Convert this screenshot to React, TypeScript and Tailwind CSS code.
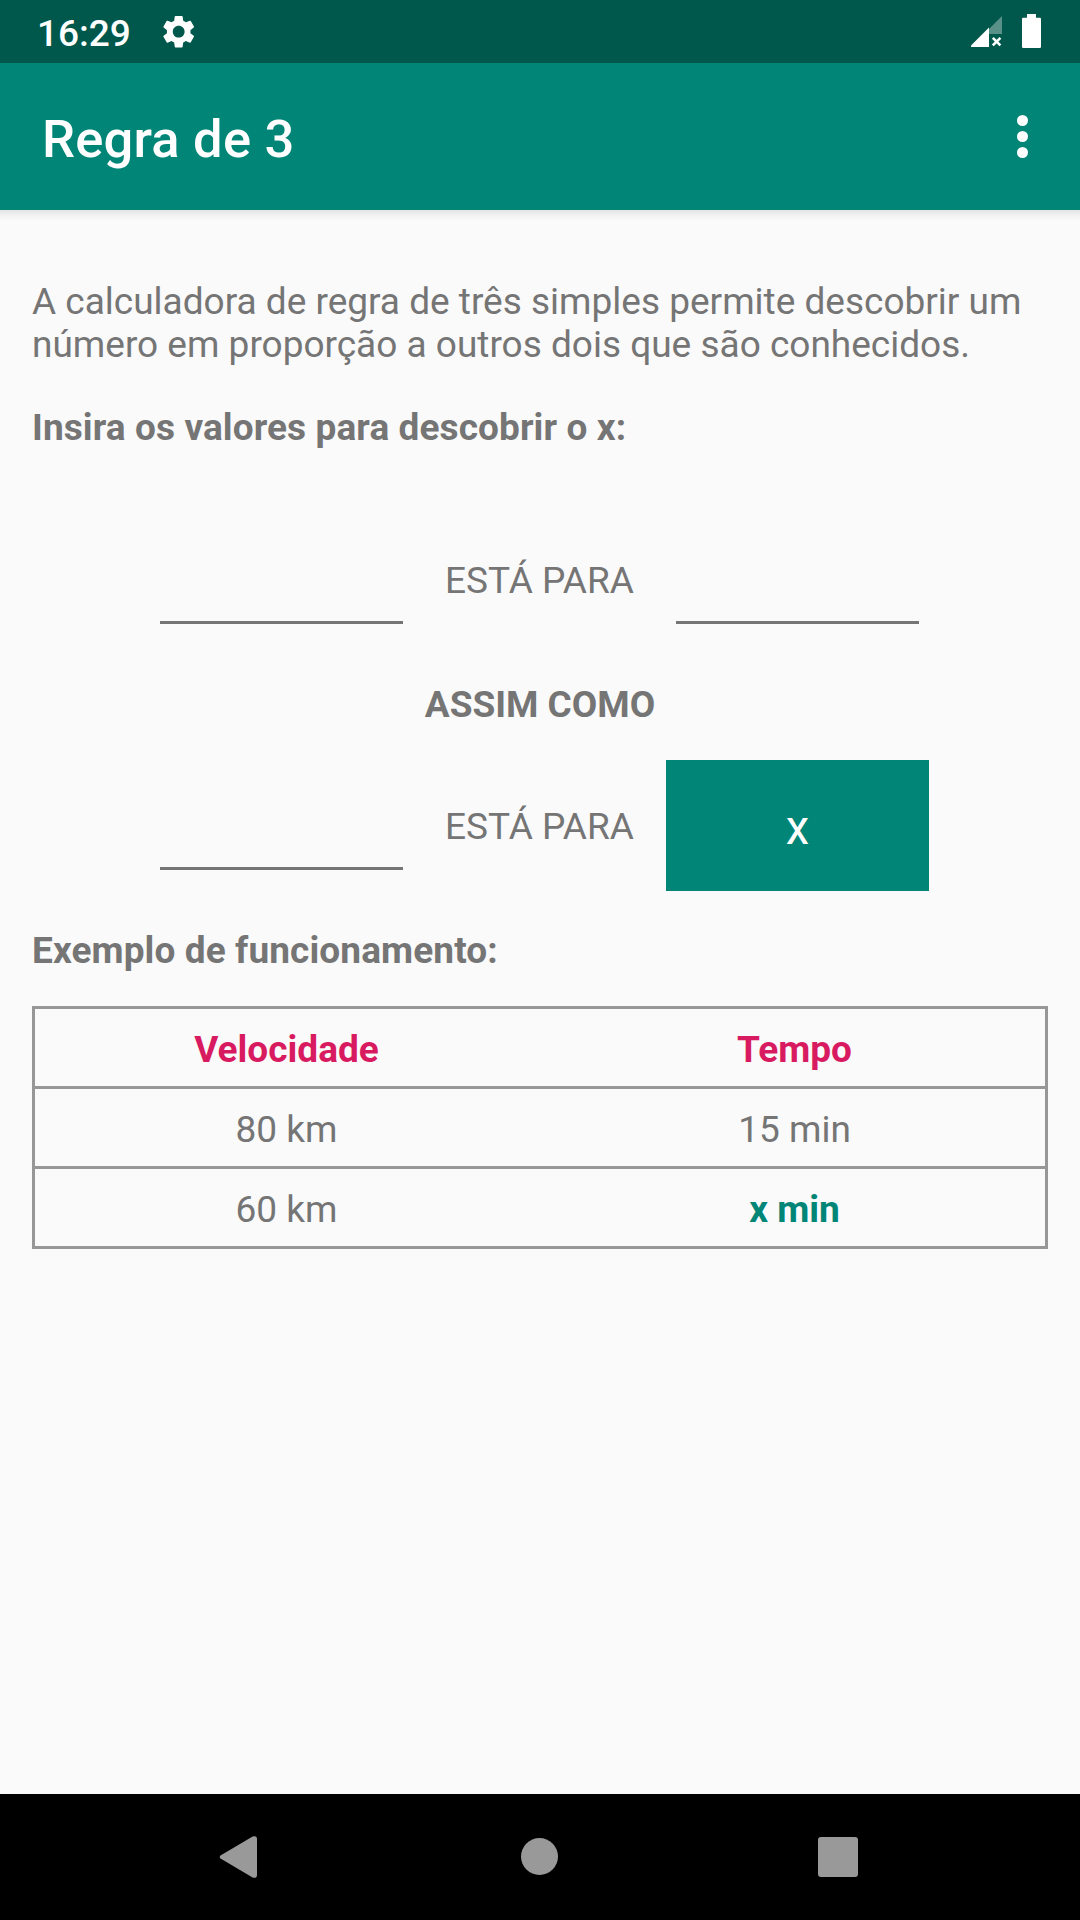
import { useState } from 'react';
import { MdSettings } from 'react-icons/md';

const rows = [
  { velocidade: '80 km', tempo: '15 min', unknown: false },
  { velocidade: '60 km', tempo: 'x min', unknown: true },
];

function StatusBar() {
  return (
    <div className="h-[63px] bg-[#00574b] flex items-start text-white">
      <span className="ml-[37px] mt-[12px] text-[37px] leading-[43px] font-medium">16:29</span>
      <MdSettings className="ml-[28px] mt-[11.5px] w-[39.4px] h-[39.4px]" />
      <svg className="ml-auto mt-[16px] w-[31px] h-[31px]" viewBox="0 0 31 31" fill="none">
        <path d="M18 13L31 0V18H18Z" fill="#fff" fillOpacity="0.35" />
        <path d="M0 31V29.5L18 11.5V31Z" fill="#fff" />
        <path d="M21.8 21.8L29.4 29.4M29.4 21.8L21.8 29.4" stroke="#fff" strokeWidth="2.6" />
      </svg>
      <svg className="ml-5 mr-[39px] mt-[14px] w-[19px] h-[34px]" viewBox="0 0 19 34" fill="#fff">
        <rect x="5" y="0" width="9" height="5" />
        <rect x="0" y="3.7" width="19" height="30.3" rx="1.3" />
      </svg>
    </div>
  );
}

function NavBar() {
  return (
    <div className="h-[126px] bg-black flex items-start text-[#999999]">
      <svg className="ml-[219px] mt-[42px] w-[38px] h-[42px]" viewBox="0 0 38 42" fill="currentColor">
        <path d="M1.5 19.4L33.6 0.5Q38 -0.8 38 3V39Q38 42.8 33.6 41.5L1.5 22.6Q0 21 1.5 19.4Z" />
      </svg>
      <div className="ml-[264px] mt-[44px] w-[37px] h-[37px] rounded-full bg-[#999999]" />
      <div className="ml-[260px] mt-[43px] w-[40px] h-[40px] rounded-[3px] bg-[#999999]" />
    </div>
  );
}

export default function App() {
  const [a, setA] = useState('');
  const [b, setB] = useState('');
  const [c, setC] = useState('');
  const [result, setResult] = useState('x');

  const handleCalculate = () => {
    const value = (Number(b) * Number(c)) / Number(a);
    if (a && b && c && Number.isFinite(value)) {
      setResult(String(value));
    }
  };

  return (
    <div className="w-[1080px] h-[1920px] flex flex-col bg-[#fafafa] text-[#757575] text-[37px] leading-[43px] font-[Roboto,sans-serif]">
      <StatusBar />
      <header className="h-[147px] bg-[#008577] flex items-start justify-between">
        <h1 className="ml-[42px] mt-[45px] text-[52.5px] leading-[62px] tracking-[0.2px] font-medium text-white">Regra de 3</h1>
        <button className="mt-[52px] mr-[52px] flex flex-col gap-[5px]" aria-label="Menu">
          <span className="w-[11px] h-[11px] rounded-full bg-white" />
          <span className="w-[11px] h-[11px] rounded-full bg-white" />
          <span className="w-[11px] h-[11px] rounded-full bg-white" />
        </button>
      </header>
      <div className="h-[11px] bg-gradient-to-b from-[#e4e4e4] via-[#f2f2f2] to-[#fafafa]" />

      <main className="flex-1 px-8 pt-[59px]">
        <p>A calculadora de regra de três simples permite descobrir um número em proporção a outros dois que são conhecidos.</p>
        <p className="mt-10 font-bold tracking-[0.1px]">Insira os valores para descobrir o x:</p>

        <div className="mt-[110px] ml-[128px] h-[65px] flex">
          <input value={a} onChange={(e) => setA(e.target.value)} className="w-[243px] border-b-[3px] border-[#757575] text-center outline-none" />
          <span className="w-[273px] text-center">ESTÁ PARA</span>
          <input value={b} onChange={(e) => setB(e.target.value)} className="w-[243px] border-b-[3px] border-[#757575] text-center outline-none" />
        </div>
        <p className="mt-[59px] text-center font-bold">ASSIM COMO</p>
        <div className="mt-[34px] ml-[128px] flex">
          <input value={c} onChange={(e) => setC(e.target.value)} className="w-[243px] h-[110px] border-b-[3px] border-[#757575] text-center outline-none" />
          <span className="mt-[45px] w-[273px] text-center">ESTÁ PARA</span>
          <button onClick={handleCalculate} className="-ml-[10px] w-[263px] h-[131px] pt-[6px] bg-[#008577] text-white text-[47.25px] leading-[55px]">{result}</button>
        </div>

        <p className="mt-[38px] font-bold tracking-[0.1px]">Exemplo de funcionamento:</p>
        <table className="mt-[34px] w-full table-fixed border-collapse border-[3px] border-[#979797] text-center">
          <thead>
            <tr className="h-[80px] border-b-[3px] border-[#979797] text-[#d81b60]">
              <th className="p-0 pt-1 pr-[2px] font-bold">Velocidade</th>
              <th className="p-0 pt-1 pl-[4px] font-bold">Tempo</th>
            </tr>
          </thead>
          <tbody>
            {rows.map((row) => (
              <tr key={row.velocidade} className="h-[80px] border-b-[3px] border-[#979797]">
                <td className="p-0 pt-1 pr-[2px]">{row.velocidade}</td>
                <td className={row.unknown ? 'p-0 pt-1 pl-[4px] font-bold text-[#008577]' : 'p-0 pt-1 pl-[4px]'}>{row.tempo}</td>
              </tr>
            ))}
          </tbody>
        </table>
      </main>
      <NavBar />
    </div>
  );
}
